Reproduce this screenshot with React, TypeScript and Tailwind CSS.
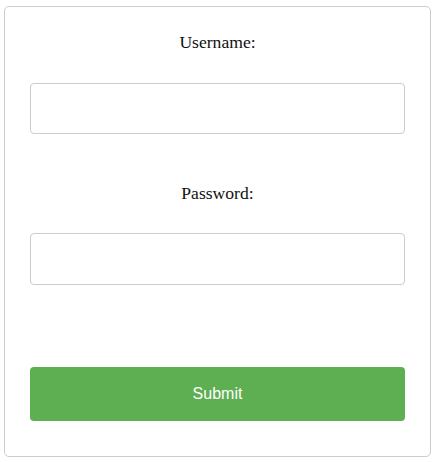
export default function App() {
  return (
    <div className="w-[436px] h-[462px] bg-white pt-[6px] pl-[4px]">
      <form
        className="w-[427px] h-[451px] border border-[#cccccc] rounded-[5px] px-[25px] pt-[26px] flex flex-col"
        onSubmit={(e) => e.preventDefault()}
      >
        <label className="block text-center text-[17.6px] leading-[18px] text-[#111] font-['Liberation_Serif',serif]">
          Username:
        </label>
        <input
          type="text"
          className="mt-[32px] h-[51px] w-full border border-[#cccccc] rounded-[4px] px-3 outline-none"
        />
        <label className="mt-[50px] block text-center text-[17.6px] leading-[18px] text-[#111] font-['Liberation_Serif',serif]">
          Password:
        </label>
        <input
          type="password"
          className="mt-[31px] h-[52px] w-full border border-[#cccccc] rounded-[4px] px-3 outline-none"
        />
        <button
          type="submit"
          className="mt-[82px] h-[54px] w-full rounded-[4px] bg-[#5eae52] text-white text-[16px] font-['Liberation_Sans',Arial,sans-serif]"
        >
          Submit
        </button>
      </form>
    </div>
  );
}
